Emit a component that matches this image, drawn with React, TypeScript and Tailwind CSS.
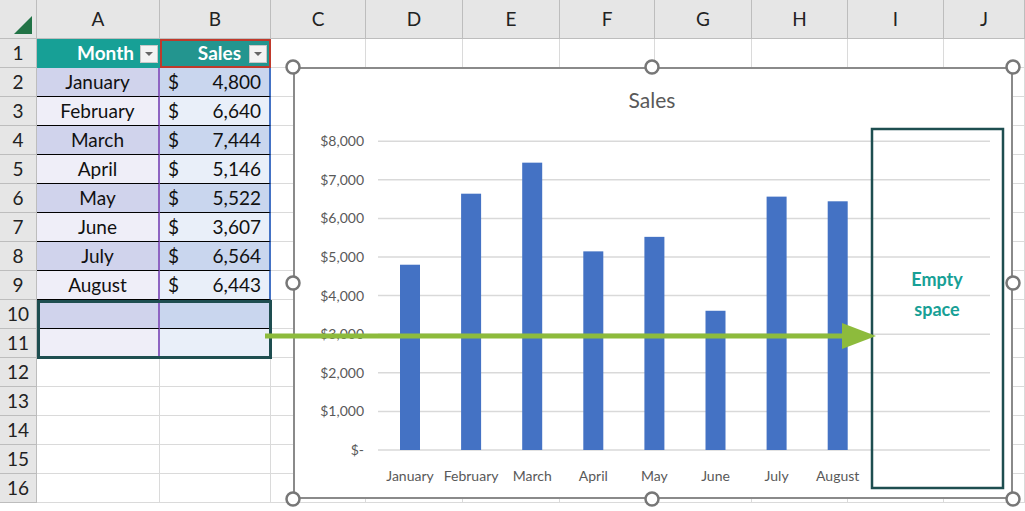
import React from "react";

const cols = ["A","B","C","D","E","F","G","H","I","J"];
const widths = [123,111,95,97,97,95,97,96,96,81];
const data: [string, number][] = [["January",4800],["February",6640],["March",7444],["April",5146],["May",5522],["June",3607],["July",6564],["August",6443]];

function Drop() {
  return (
    <div className="w-[18px] h-[18px] bg-[#f3f3f3] border border-[#c8c8c8] flex items-center justify-center">
      <div className="w-0 h-0 border-l-[4px] border-r-[4px] border-t-[4px] border-l-transparent border-r-transparent border-t-[#666]" />
    </div>
  );
}

export default function App() {
  const rows = Array.from({ length: 16 }, (_, i) => i + 1);
  const y0 = 450, step = 38.6;
  const handles = [[293,67],[652,67],[1013,67],[293,283],[1013,283],[293,499],[652,499],[1013,499]];
  return (
    <div className="relative w-[1025px] h-[511px] overflow-hidden bg-white" style={{ fontFamily: "Lato, 'Noto Sans', sans-serif" }}>
      <div className="grid" style={{ gridTemplateColumns: "37px 123px 111px 95px 97px 97px 95px 97px 96px 96px 81px", gridTemplateRows: "39px repeat(17, 29px)" }}>
        <div className="bg-[#e6e6e6] border-r border-b border-[#bdbdbd] relative">
          <div className="absolute right-[4px] bottom-[4px] w-0 h-0 border-l-[18px] border-t-[18px] border-l-transparent border-t-transparent border-r-0 border-b-0" style={{ borderBottom: "18px solid #217346", borderLeft: "18px solid transparent", borderTop: 0 }} />
        </div>
        {cols.map((c) => (
          <div key={c} className="bg-[#e6e6e6] border-r border-b border-[#bdbdbd] flex items-center justify-center text-[19px] text-[#222]">{c}</div>
        ))}
        {rows.map((r) => (
          <React.Fragment key={r}>
            <div className="bg-[#e6e6e6] border-r border-b border-[#bdbdbd] flex items-center justify-center text-[19px] text-[#222]">{r}</div>
            {cols.map((c, ci) => {
              if (r === 1 && ci === 0)
                return <div key={c} className="bg-[#17a096] flex items-center justify-end gap-[6px] pr-[2px] text-white font-bold text-[19px]">Month<Drop /></div>;
              if (r === 1 && ci === 1)
                return <div key={c} className="bg-[#23958f] border-2 border-[#c0392b] flex items-center justify-end gap-[8px] pr-[2px] text-white font-bold text-[19px]">Sales<Drop /></div>;
              if (r >= 2 && r <= 11 && ci < 2) {
                const dark = r % 2 === 0;
                const d = data[r - 2];
                const bg = ci === 0 ? (dark ? "bg-[#d0d3ec]" : "bg-[#efeef8]") : (dark ? "bg-[#c9d6ee]" : "bg-[#e9eff9]");
                const bd = ci === 0 ? "border-r-2 border-r-[#8e63c2]" : "border-r-2 border-r-[#4472c4]";
                return (
                  <div key={c} className={`${bg} ${bd} border-b border-b-black flex items-center text-[19px] text-[#111] ${ci === 0 ? "justify-center" : "justify-between px-[8px]"}`}>
                    {d ? (ci === 0 ? d[0] : <><span>$</span><span>{d[1].toLocaleString("en-US")}</span></>) : null}
                  </div>
                );
              }
              return <div key={c} className="border-r border-b border-[#dadada]" />;
            })}
          </React.Fragment>
        ))}
      </div>

      <div className="absolute left-[37px] top-[300px] w-[235px] h-[59px] border-[3px] border-[#1e4e50]" />

      <div className="absolute left-[293px] top-[67px] w-[720px] h-[432px] bg-white border-2 border-[#8a8a8a]" />
      <svg className="absolute left-0 top-0" width={1025} height={511}>
        <text x={652} y={108} textAnchor="middle" fontSize={21} fill="#595959" fontFamily="Lato, sans-serif">Sales</text>
        {Array.from({ length: 9 }, (_, i) => {
          const y = y0 - i * step;
          return (
            <g key={i}>
              <line x1={378} x2={990} y1={y} y2={y} stroke="#d9d9d9" strokeWidth={1.5} />
              <text x={364} y={y + 5} textAnchor="end" fontSize={14} fill="#595959" fontFamily="Lato, sans-serif">{i === 0 ? "$-" : `$${i},000`}</text>
            </g>
          );
        })}
        {data.map(([m, v], i) => {
          const cx = 410 + i * 61.1;
          const h = (v / 8000) * step * 8;
          return (
            <g key={m}>
              <rect x={cx - 10} y={y0 - h} width={20} height={h} fill="#4472c4" />
              <text x={cx} y={481} textAnchor="middle" fontSize={14} fill="#595959" fontFamily="Lato, sans-serif">{m}</text>
            </g>
          );
        })}
        <rect x={872} y={129} width={131} height={359} fill="none" stroke="#1e4e50" strokeWidth={2.5} />
        <text x={937} y={286} textAnchor="middle" fontSize={18} fontWeight="bold" fill="#17a096" fontFamily="Lato, sans-serif">Empty</text>
        <text x={937} y={316} textAnchor="middle" fontSize={18} fontWeight="bold" fill="#17a096" fontFamily="Lato, sans-serif">space</text>
        <line x1={265} x2={845} y1={336} y2={336} stroke="#8dbb3c" strokeWidth={5} />
        <polygon points="842,323 876,336 842,349" fill="#8dbb3c" />
        {handles.map(([x, y], i) => (
          <circle key={i} cx={x} cy={y} r={6.5} fill="white" stroke="#777" strokeWidth={2.5} />
        ))}
      </svg>
    </div>
  );
}
